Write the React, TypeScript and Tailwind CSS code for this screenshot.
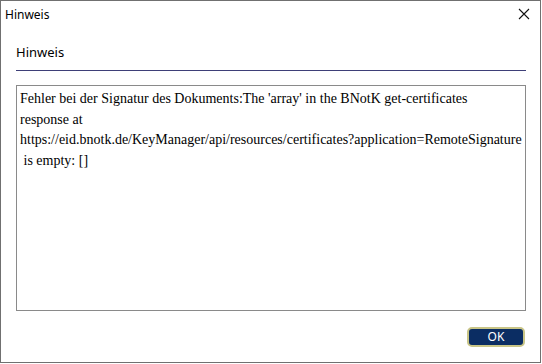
import React from "react";

export default function App() {
  return (
    <div className="w-[542px] h-[364px] bg-white overflow-hidden">
      <div className="w-[541px] h-[363px] border border-[#707070] bg-white flex flex-col font-['Noto_Sans',sans-serif]">
        <div className="h-[29px] flex items-start justify-between pl-[4px] pr-[10px] pt-[8px]">
          <span className="text-[12px] text-black leading-none">Hinweis</span>
          <svg width="12" height="12" viewBox="0 0 12 12" className="mt-[-1px]">
            <path d="M1 1 L11 11 M11 1 L1 11" stroke="#111" strokeWidth="1.1" fill="none" />
          </svg>
        </div>
        <div className="px-[15px] flex flex-col">
          <div className="h-[28px] flex items-end pb-[6px] mt-[7px] text-[13px] text-black leading-none">Hinweis</div>
          <div className="h-[1px] w-[510px] bg-[#3e3f78] mt-[5px]"></div>
          <div className="mt-[14px] w-[510px] h-[226px] border border-[#8a8a8a] px-[3px] pt-[3px] text-[14px] leading-[20.5px] text-black font-['Liberation_Serif','DejaVu_Serif',serif]">
            <div>Fehler bei der Signatur des Dokuments:The 'array' in the BNotK get-certificates</div>
            <div>response at</div>
            <div>https://eid.bnotk.de/KeyManager/api/resources/certificates?application=RemoteSignature</div>
            <div>&nbsp;is empty: []</div>
          </div>
          <div className="flex justify-end mt-[16px]">
            <div className="w-[58px] h-[20px] rounded-[5px] bg-[#0b2d63] border-2 border-[#c9c587] text-white text-[12px] leading-none flex items-center justify-center">
              OK
            </div>
          </div>
        </div>
      </div>
    </div>
  );
}
